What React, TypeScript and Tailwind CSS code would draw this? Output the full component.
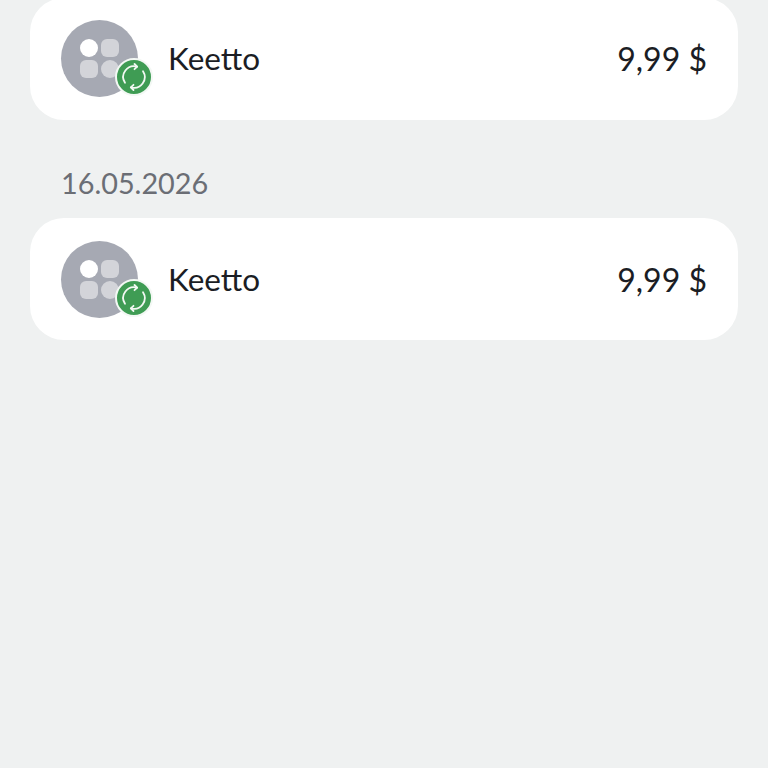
const font = { fontFamily: '"Lato", "Noto Sans", sans-serif' };

function AppIcon() {
  return (
    <div className="relative h-[77px] w-[77px] shrink-0 rounded-full bg-[#a6a9b3]">
      <div className="grid grid-cols-[18px_18px] grid-rows-[18px_18px] gap-[3px] pl-[19px] pt-[19px]">
        <div className="rounded-full bg-white" />
        <div className="rounded-[6px] bg-[#d3d4d9]" />
        <div className="rounded-[6px] bg-[#d3d4d9]" />
        <div className="rounded-full bg-[#d3d4d9]" />
      </div>
      <div className="absolute left-[54px] top-[38px] flex h-[38px] w-[38px] items-center justify-center rounded-full border-[2px] border-[#f3f8f4] bg-[#3f9c54]">
        <svg width="32" height="32" viewBox="-16 -16 32 32" fill="none" stroke="#f2f8f3" strokeWidth="1.8" strokeLinecap="round" strokeLinejoin="round">
          <path d="M-9 5.8A10.7 10.7 0 0 1 3 -10.3" />
          <path d="M0.5 -13L3.2 -10.3L0.5 -7.8" />
          <path d="M9 -5.8A10.7 10.7 0 0 1 -3 10.3" />
          <path d="M-0.5 13L-3.2 10.3L-0.5 7.8" />
        </svg>
      </div>
    </div>
  );
}

function Row({ first }: { first?: boolean }) {
  return (
    <div
      className={
        first
          ? "mx-[30px] flex h-[122px] items-center justify-between rounded-[34px] bg-white px-[31px] pb-[1px]"
          : "mx-[30px] flex h-[122px] items-center justify-between rounded-[34px] bg-white px-[31px]"
      }
    >
      <div className="flex items-center gap-[30px]">
        <AppIcon />
        <span className={first ? "text-[31.5px] leading-none text-[#1b1d24]" : "pt-[2px] text-[31.5px] leading-none text-[#1b1d24]"}>Keetto</span>
      </div>
      <span className={first ? "text-[32px] leading-none text-[#1b1d24]" : "pt-[2px] text-[32px] leading-none text-[#1b1d24]"}>9,99 $</span>
    </div>
  );
}

export default function App() {
  return (
    <div className="h-[768px] w-[768px] overflow-hidden bg-[#eff1f1]" style={font}>
      <div className="-mt-[2px]">
        <Row first />
      </div>
      <div className="pb-[18px] pl-[61px] pt-[46px] text-[28.8px] leading-[34px] text-[#6b6e75]">16.05.2026</div>
      <Row />
    </div>
  );
}
